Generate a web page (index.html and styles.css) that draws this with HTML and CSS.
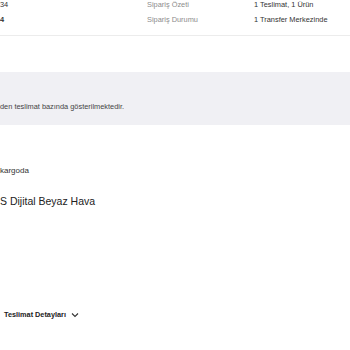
FILE: index.html
```html
<!DOCTYPE html>
<html lang="tr">
<head>
    <meta charset="UTF-8">
    <title>Sipariş Detayı</title>
    <link rel="stylesheet" href="styles.css">
</head>
<body>
    <div class="page">
        <div class="order-head">
            <div class="order-no">
                <span>34</span>
                <span class="strong">4</span>
            </div>
            <div class="order-labels">
                <span>Sipariş Özeti</span>
                <span>Sipariş Durumu</span>
            </div>
            <div class="order-values">
                <span>1 Teslimat, 1 Ürün</span>
                <span>1 Transfer Merkezinde</span>
            </div>
        </div>

        <div class="notice">
            <p>den teslimat bazında gösterilmektedir.</p>
        </div>

        <div class="delivery">
            <p class="status">kargoda</p>
            <p class="product">S Dijital Beyaz Hava</p>
        </div>

        <button class="details-toggle">
            Teslimat Detayları
            <svg width="8" height="6" viewBox="0 0 8 6"><path d="M1 1.5 L4 4.5 L7 1.5" fill="none" stroke="#333" stroke-width="1.1"/></svg>
        </button>
    </div>
</body>
</html>
```

FILE: styles.css
```css
body {
    margin: 0;
    background: #fff;
    font-family: "Liberation Sans", Arial, sans-serif;
    color: #333;
}
.page {
    width: 350px;
    height: 350px;
    overflow: hidden;
}
.order-head {
    display: grid;
    grid-template-columns: 147px 107px 1fr;
    height: 35px;
    border-bottom: 1px solid #ececec;
    font-size: 7.4px;
}
.order-head > div {
    display: flex;
    flex-direction: column;
    gap: 6px;
    line-height: 9px;
}
.order-labels {
    color: #8c8c8c;
}
.strong {
    font-weight: bold;
}
.notice {
    margin-top: 36px;
    height: 53px;
    background: #f0f0f4;
    display: flex;
    align-items: flex-end;
}
.notice p {
    margin: 0 0 14px;
    font-size: 7.4px;
    color: #444;
}
.delivery p {
    margin: 0;
}
.status {
    margin-top: 41px !important;
    font-size: 8px;
    line-height: 10px;
}
.product {
    margin-top: 19px !important;
    font-size: 10.5px;
    line-height: 12px;
    color: #222;
}
.details-toggle {
    display: flex;
    align-items: center;
    gap: 5px;
    margin: 103px 0 0 4px;
    padding: 0;
    border: none;
    background: none;
    font-family: inherit;
    font-weight: bold;
    font-size: 7.3px;
    color: #222;
}
```
